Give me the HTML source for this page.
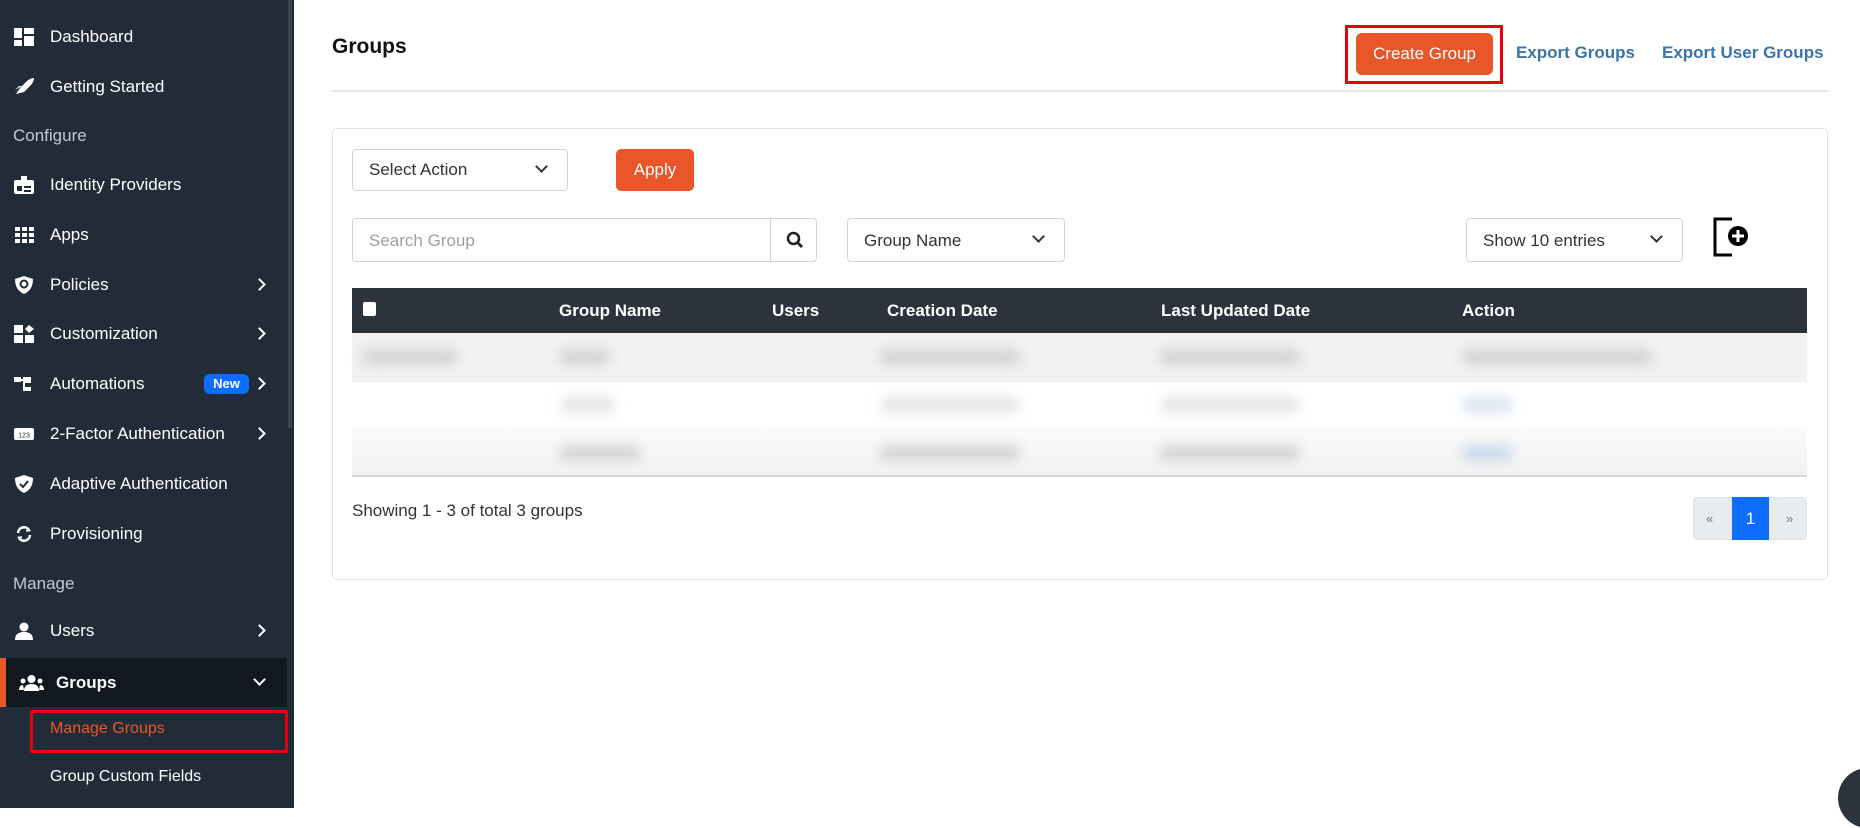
<!DOCTYPE html>
<html><head><style>
*{box-sizing:border-box;margin:0;padding:0}
body{width:1860px;height:808px;overflow:hidden;background:#fff;font-family:"Liberation Sans",sans-serif;position:relative}
#sb{position:absolute;left:0;top:0;width:294px;height:808px;background:#222c38}
#sb .sc{position:absolute;left:288px;top:0;width:4px;height:428px;background:#3a4552;border-radius:2px}
.it{position:absolute;left:0;width:287px;height:44px;color:#fff;font-size:17px;line-height:44px}
.it .ic{position:absolute;left:14px;top:13px;width:20px;height:18px}
.it .tx{position:absolute;left:50px}
.it .ch{position:absolute;left:255px;top:17px;width:9px;height:9px;border-right:2.5px solid #fff;border-top:2.5px solid #fff;transform:rotate(45deg)}
.sec{position:absolute;left:13px;color:#c3c8cf;font-size:17px}
.a{position:absolute}
.box{position:absolute;border:1px solid #cfd4da;border-radius:4px;background:#fff;font-size:17px;color:#333}
.chev{position:absolute;width:9px;height:9px;border-right:2px solid #333;border-bottom:2px solid #333;transform:rotate(45deg)}
.blur{position:absolute;height:14px;background:#d0d0d0;border-radius:6px;filter:blur(6px)}
</style></head><body>
<div id="sb"><div class="sc"></div>
<div class="it" style="top:15px"><svg class="ic" viewBox="0 0 20 18"><rect x="0" y="0" width="8" height="10" fill="#fff"/><rect x="10" y="0" width="10" height="6" fill="#fff"/><rect x="0" y="12" width="8" height="6" fill="#fff"/><rect x="10" y="8" width="10" height="10" fill="#fff"/></svg><span class="tx">Dashboard</span></div>
<div class="it" style="top:65px"><svg class="ic" viewBox="0 0 20 18"><path d="M2 16 L6 10 L12 4 Q16 0 20 0 Q20 4 16 8 L10 14Z M1 12 L5 8 L8 8 Z" fill="#fff"/></svg><span class="tx">Getting Started</span></div>
<div class="sec" style="top:126px">Configure</div>
<div class="it" style="top:163px"><svg class="ic" viewBox="0 0 20 18"><rect x="0" y="4" width="20" height="14" rx="2" fill="#fff"/><rect x="7" y="0" width="6" height="6" fill="#fff"/><rect x="3" y="10" width="5" height="5" fill="#222c38"/><rect x="10" y="10" width="7" height="2" fill="#222c38"/><rect x="10" y="14" width="7" height="2" fill="#222c38"/></svg><span class="tx">Identity Providers</span></div>
<div class="it" style="top:213px"><svg class="ic" viewBox="0 0 20 18"><g fill="#fff"><rect x="1" y="1" width="5" height="4"/><rect x="8" y="1" width="5" height="4"/><rect x="15" y="1" width="5" height="4"/><rect x="1" y="7" width="5" height="4"/><rect x="8" y="7" width="5" height="4"/><rect x="15" y="7" width="5" height="4"/><rect x="1" y="13" width="5" height="4"/><rect x="8" y="13" width="5" height="4"/><rect x="15" y="13" width="5" height="4"/></g></svg><span class="tx">Apps</span></div>
<div class="it" style="top:263px"><svg class="ic" viewBox="0 0 20 18"><path d="M10 0 L19 3 Q19 14 10 18 Q1 14 1 3Z" fill="#fff"/><circle cx="10" cy="8" r="3.5" fill="none" stroke="#222c38" stroke-width="2"/></svg><span class="tx">Policies</span><span class="ch"></span></div>
<div class="it" style="top:312px"><svg class="ic" viewBox="0 0 20 18"><g fill="#fff"><rect x="0" y="0" width="9" height="8"/><rect x="0" y="10" width="9" height="8"/><rect x="11" y="10" width="9" height="8"/><path d="M15 0 L20 4 L15 8 L11 4Z"/></g></svg><span class="tx">Customization</span><span class="ch"></span></div>
<div class="it" style="top:362px"><svg class="ic" viewBox="0 0 20 18"><g fill="#fff"><rect x="0" y="2" width="7" height="5"/><rect x="9" y="2" width="8" height="14"/><rect x="7" y="4" width="2" height="2"/></g><rect x="11" y="8" width="6" height="4" fill="#222c38"/></svg><span class="tx">Automations</span><span style="position:absolute;left:204px;top:12px;width:45px;height:20px;background:#0d6efd;border-radius:6px;font-size:13px;font-weight:bold;line-height:20px;text-align:center">New</span><span class="ch"></span></div>
<div class="it" style="top:412px"><svg class="ic" viewBox="0 0 20 18"><rect x="0" y="3" width="20" height="12" rx="2" fill="#fff"/><text x="10" y="12.5" font-size="7" text-anchor="middle" fill="#222c38" font-family="Liberation Sans">123</text></svg><span class="tx">2-Factor Authentication</span><span class="ch"></span></div>
<div class="it" style="top:462px"><svg class="ic" viewBox="0 0 20 18"><path d="M10 0 L19 3 Q19 14 10 18 Q1 14 1 3Z" fill="#fff"/><path d="M6 9 L9 12 L14 6" fill="none" stroke="#222c38" stroke-width="2"/></svg><span class="tx">Adaptive Authentication</span></div>
<div class="it" style="top:512px"><svg class="ic" viewBox="0 0 20 18"><path d="M4 8 A6 6 0 0 1 15 5 M16 10 A6 6 0 0 1 5 13" fill="none" stroke="#fff" stroke-width="2.5"/><path d="M13 2 L17 6 L12 7Z M7 16 L3 12 L8 11Z" fill="#fff"/></svg><span class="tx">Provisioning</span></div>
<div class="sec" style="top:574px">Manage</div>
<div class="it" style="top:609px"><svg class="ic" viewBox="0 0 20 18"><circle cx="10" cy="5" r="4.5" fill="#fff"/><path d="M1 18 Q1 10 10 10 Q19 10 19 18Z" fill="#fff"/></svg><span class="tx">Users</span><span class="ch"></span></div>
<div class="it" style="top:658px;height:49px;background:#111820;line-height:49px;font-weight:bold"><div style="position:absolute;left:0;top:0;width:6px;height:49px;background:#e8562a"></div><svg class="ic" style="left:19px;top:16px;width:25px" viewBox="0 0 25 18"><g fill="#fff"><circle cx="12.5" cy="5" r="4"/><path d="M5 17 Q5 10 12.5 10 Q20 10 20 17Z"/><circle cx="4" cy="7" r="2.5"/><circle cx="21" cy="7" r="2.5"/><path d="M0 16 Q0 11 4 11 L5 16Z M25 16 Q25 11 21 11 L20 16Z"/></g></svg><span class="tx" style="left:56px">Groups</span><span class="ch" style="top:17px;transform:rotate(135deg)"></span></div>
<div class="a" style="left:30px;top:710px;width:258px;height:43px;border:3px solid #e8000b;border-radius:2px"></div>
<div class="a" style="left:50px;top:720px;color:#e8562a;font-size:16px">Manage Groups</div>
<div class="a" style="left:50px;top:768px;color:#fff;font-size:16px">Group Custom Fields</div>
</div>

<div class="a" style="left:332px;top:35px;font-size:21px;font-weight:bold;color:#111">Groups</div>
<div class="a" style="left:1345px;top:25px;width:158px;height:59px;border:3px solid #e8000b"></div>
<div class="a" style="left:1356px;top:33px;width:137px;height:42px;background:#e8562a;border-radius:6px;color:#fff;font-size:17px;line-height:42px;text-align:center">Create Group</div>
<div class="a" style="left:1516px;top:43px;color:#3a74a8;font-size:17px;font-weight:bold">Export Groups</div>
<div class="a" style="left:1662px;top:43px;color:#3a74a8;font-size:17px;font-weight:bold">Export User Groups</div>
<div class="a" style="left:332px;top:90px;width:1496px;height:2px;background:#e3e5e8"></div>

<div class="a" style="left:332px;top:128px;width:1496px;height:452px;border:1px solid #e0e3e6;border-radius:5px"></div>
<div class="box" style="left:352px;top:149px;width:216px;height:42px"><span class="a" style="left:16px;top:10px">Select Action</span><span class="chev" style="left:184px;top:12px"></span></div>
<div class="a" style="left:616px;top:149px;width:78px;height:42px;background:#e8562a;border-radius:5px;color:#fff;font-size:17px;line-height:42px;text-align:center">Apply</div>
<div class="box" style="left:352px;top:218px;width:465px;height:44px"><span class="a" style="left:16px;top:12px;color:#9aa0a6">Search Group</span><div class="a" style="left:417px;top:0;width:1px;height:42px;background:#cfd4da"></div><svg class="a" style="left:433px;top:12px" width="18" height="18" viewBox="0 0 18 18"><circle cx="7.5" cy="7.5" r="5.5" fill="none" stroke="#222" stroke-width="2.5"/><path d="M11.5 11.5 L16 16" stroke="#222" stroke-width="2.8"/></svg></div>
<div class="box" style="left:847px;top:218px;width:218px;height:44px"><span class="a" style="left:16px;top:12px">Group Name</span><span class="chev" style="left:186px;top:13px"></span></div>
<div class="box" style="left:1466px;top:218px;width:217px;height:44px"><span class="a" style="left:16px;top:12px">Show 10 entries</span><span class="chev" style="left:185px;top:13px"></span></div>
<svg class="a" style="left:1712px;top:216px" width="40" height="42" viewBox="0 0 40 42"><path d="M20 3 L3 3 L3 39 L20 39" fill="none" stroke="#000" stroke-width="3"/><circle cx="26" cy="20" r="10" fill="#000"/><path d="M26 14 V26 M20 20 H32" stroke="#fff" stroke-width="3"/></svg>

<div class="a" style="left:352px;top:288px;width:1455px;height:45px;background:#2d333c;color:#fff;font-size:17px;font-weight:bold">
<div class="a" style="left:11px;top:14px;width:13px;height:14px;background:#fff;border-radius:2px"></div>
<span class="a" style="left:207px;top:13px">Group Name</span><span class="a" style="left:420px;top:13px">Users</span><span class="a" style="left:535px;top:13px">Creation Date</span><span class="a" style="left:809px;top:13px">Last Updated Date</span><span class="a" style="left:1110px;top:13px">Action</span></div>
<div class="a" style="left:352px;top:333px;width:1455px;height:49px;background:#f2f2f2"></div>
<div class="a" style="left:352px;top:428px;width:1455px;height:48px;background:linear-gradient(#fafafa,#f2f2f2)"></div>
<div class="a" style="left:352px;top:475px;width:1455px;height:2px;background:#d6d8db"></div>
<div class="blur" style="left:362px;top:350px;width:95px"></div><div class="blur" style="left:560px;top:350px;width:50px"></div><div class="blur" style="left:880px;top:350px;width:140px"></div><div class="blur" style="left:1160px;top:350px;width:140px"></div><div class="blur" style="left:1462px;top:350px;width:190px"></div>
<div class="blur" style="left:560px;top:398px;width:55px;opacity:.6"></div><div class="blur" style="left:880px;top:398px;width:140px;opacity:.6"></div><div class="blur" style="left:1160px;top:398px;width:140px;opacity:.6"></div><div class="blur" style="left:1462px;top:398px;width:50px;background:#c6d6ea;opacity:.7"></div>
<div class="blur" style="left:560px;top:446px;width:80px"></div><div class="blur" style="left:880px;top:446px;width:140px"></div><div class="blur" style="left:1160px;top:446px;width:140px"></div><div class="blur" style="left:1462px;top:446px;width:50px;background:#c6d6ea"></div>

<div class="a" style="left:352px;top:501px;font-size:17px;color:#333">Showing 1 - 3 of total 3 groups</div>
<div class="a" style="left:1693px;top:497px;width:114px;height:43px;background:#e9ecef;border:1px solid #dee2e6;border-radius:4px;color:#777;font-size:13px">
<span class="a" style="left:12px;top:13px">«</span><div class="a" style="left:38px;top:-1px;width:37px;height:43px;background:#0d6efd;color:#fff;font-size:17px;line-height:43px;text-align:center">1</div><span class="a" style="left:92px;top:13px">»</span></div>
<div class="a" style="left:1838px;top:768px;width:60px;height:60px;border-radius:50%;background:#2d333c"></div>
</body></html>
